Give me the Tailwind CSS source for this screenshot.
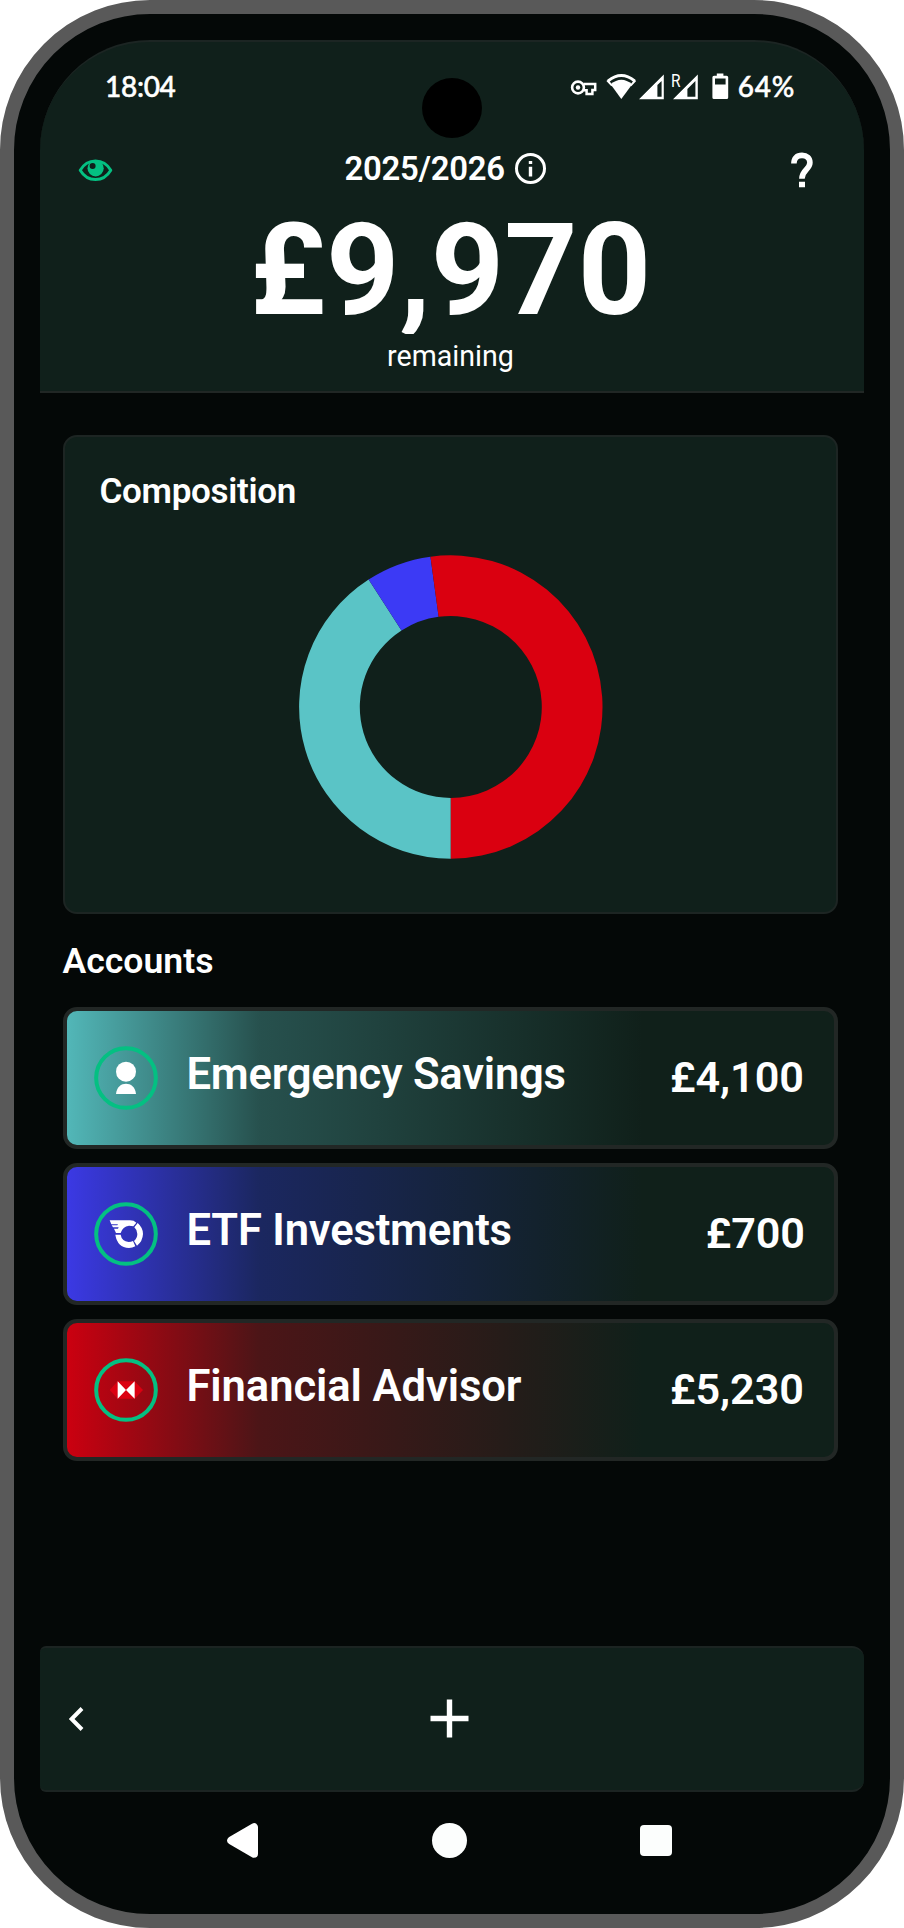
<!DOCTYPE html>
<html lang="en">
<head>
<meta charset="utf-8">
<title>Allowance</title>
<script src="https://cdn.jsdelivr.net/npm/@tailwindcss/browser@4"></script>
</head>
<body class="bg-white font-['Roboto',sans-serif] text-white">
<div class="relative flex h-[1928px] w-[904px] flex-col overflow-hidden rounded-[150px] border-[14px] border-[#595959] bg-[#040807] px-[26px] pt-[26px]">

  <header class="flex h-[353px] shrink-0 flex-col overflow-hidden rounded-t-[110px] border-y-2 border-t-[#1c2523] border-b-[#212725] bg-[#10201b]">
    <div class="flex h-[90px] shrink-0 items-center pr-[69px] pb-[2px] pl-[65px] font-['Lato',sans-serif] text-[28px] leading-8 font-medium [-webkit-text-stroke:0.5px_white]">
      <span class="tracking-[-0.3px]">18:04</span>
      <svg class="mr-[0.5px] ml-auto h-8 w-[162px] [-webkit-text-stroke:0]" viewBox="570 70.5 162 32" fill="none">
        <circle cx="579" cy="88" r="5.9" stroke="#fff" stroke-width="2.6"/>
        <circle cx="579" cy="88" r="2.2" fill="#fff"/>
        <path d="M584.5 84.6H596.2V90.6H593.4V94.4H587.6V90.8H584.6" stroke="#fff" stroke-width="2.5"/>
        <path d="M609.2 81.4Q622.3 70.6 635.6 81.4" stroke="#fff" stroke-width="3"/>
        <path d="M611.6 84.8Q622.3 75.6 633.2 84.8L622.3 99.4Z" fill="#fff"/>
        <path d="M607.4 81.4l1.8-1.4 4.4 5.8-1.3 1zM637.2 81.4l-1.8-1.4-4.4 5.8 1.3 1z" fill="#fff"/>
        <path fill-rule="evenodd" d="M640 99.7L664.8 75v24.7zM658.4 85.6v11.6h4.2V81.4z" fill="#fff"/>
        <path fill-rule="evenodd" d="M674 99.7L698.8 75v24.7zM688.4 89.6v7.6h8V81.6z" fill="#fff"/>
        <text x="672" y="87" font-family="Roboto" font-weight="400" font-size="18" textLength="9.5" lengthAdjust="spacingAndGlyphs" fill="#fff">R</text>
        <path fill-rule="evenodd" d="M717.8 74h6.6v2.2h3.2a1.6 1.6 0 0 1 1.6 1.6v20.2a1.6 1.6 0 0 1-1.6 1.6h-12.6a1.6 1.6 0 0 1-1.6-1.6V77.8a1.6 1.6 0 0 1 1.6-1.6h2.8zM716 79v6h10.6v-6z" fill="#fff"/>
      </svg>
      <span class="ml-[6px] tracking-[0.7px]">64%</span>
    </div>

    <div class="flex h-[72px] shrink-0 items-center pr-[51.5px] pl-[38px]">
      <svg class="mt-[4px] h-[22px] w-[35px]" viewBox="0 0 35 22" fill="none">
        <path d="M2.2 11.2C9.5-1.3 25.5-1.3 32.8 11.2C25.5 23.6 9.5 23.6 2.2 11.2Z" stroke="#04c082" stroke-width="2.9" stroke-linejoin="round"/>
        <circle cx="17.6" cy="9.3" r="8.1" fill="#04c082"/>
        <circle cx="14.6" cy="7" r="3" fill="#10201b"/>
      </svg>
      <span class="ml-[231.5px] w-[159px] pt-px text-[32.9px] leading-10 font-semibold tracking-[-0.3px] whitespace-nowrap">2025/2026</span>
      <svg class="ml-[11px] h-[31px] w-[31px]" viewBox="0 0 31 31">
        <circle cx="15.5" cy="15.5" r="14" fill="none" stroke="#fff" stroke-width="3"/>
        <path d="M13.8 8h3.4v3h-3.4zM13.8 13.7h3.4v9.8h-3.4z" fill="#fff"/>
      </svg>
      <svg class="mt-[4px] ml-auto h-[36px] w-[22px]" viewBox="0 0 22 36">
        <path d="M2.9 11.6C2.9 6.2 6 3.4 11 3.4S18.900 6.200 18.900 10.800C18.900 17.400 10.900 17.800 10.900 26.800" fill="none" stroke="#fff" stroke-width="5.6"/>
        <path d="M8 29.7h6v5.6H8z" fill="#fff"/>
      </svg>
    </div>

    <div class="mt-[2px] h-[128px] shrink-0 overflow-hidden pr-[3px] text-center text-[128px] leading-[128px] font-bold">£9,970</div>
    <div class="mt-[1.5px] pr-[3px] text-center text-[28.6px] leading-10">remaining</div>
  </header>

  <main class="mx-[22.5px] flex w-[775px] shrink-0 flex-col pt-[42px]">
    <section class="h-[479px] rounded-[14px] border-2 border-[#1d2523] bg-[#10201b] pt-[34.5px] pl-[35px]">
      <h2 class="text-[35px] leading-10 font-semibold tracking-[-0.3px]">Composition</h2>
      <svg class="mt-[43.5px] ml-[199px] h-[304px] w-[304px]" viewBox="-151.800 -152 304 304">
        <path d="M0 151.7A151.7 151.7 0 0 1-82.18-127.51L-49.3-76.49A91 91 0 0 0 0 91Z" fill="#5ac4c6"/>
        <path d="M-82.18-127.51A151.7 151.7 0 0 1-20.33-150.33L-12.19-90.18A91 91 0 0 0-49.3-76.49Z" fill="#3c3af5"/>
        <path d="M-20.33-150.33A151.7 151.7 0 1 1 0 151.7V91A91 91 0 1 0-12.19-90.18Z" fill="#da0010"/>
      </svg>
    </section>

    <h2 class="mt-[26.5px] text-[35.6px] leading-10 font-semibold">Accounts</h2>

    <div class="mt-[26px] flex flex-col gap-[14px]">
      <div class="flex h-[142.3px] items-center rounded-[14px] border-4 border-[#222725] bg-linear-to-r/srgb from-[#52b7b8] via-[#27514e] via-25% to-[#10201a] to-75% pr-[29.5px] pl-[27.5px]">
        <svg class="h-16 w-16" viewBox="0 0 192 192">
          <circle cx="96" cy="96" r="89.5" fill="none" stroke="#04c082" stroke-width="12"/>
          <circle cx="96" cy="77" r="30" fill="#fff"/>
          <path d="M66 144C68 122 82 113 96 113S124 122 126 144Z" fill="#fff"/>
        </svg>
        <span class="ml-[28.5px] pb-[5.500px] text-[43.6px] leading-[50px] font-semibold tracking-[-0.25px]">Emergency Savings</span>
        <span class="ml-auto text-[43.2px] leading-[50px] font-semibold tracking-[-0.05px]">£4,100</span>
      </div>

      <div class="flex h-[142.3px] items-center rounded-[14px] border-4 border-[#222725] bg-linear-to-r/srgb from-[#3b39e4] via-[#1b2760] via-25% to-[#10201a] to-75% pr-[28.5px] pl-[27.5px]">
        <svg class="h-16 w-16" viewBox="0 0 192 192">
          <circle cx="96" cy="96" r="89.5" fill="none" stroke="#04c082" stroke-width="12"/>
          <path d="M47 55H108Q120 55 127 62L118 73Q112 71 105 71Q86 73 80 93H66L60 80H72L74 76H57L53 70H70L72 67H52Z" fill="#fff"/>
          <path d="M64 98H80Q83 117 104 120Q111 120 117 117L124 133Q115 138 105 138Q70 136 64 98Z" fill="#fff"/>
          <path d="M131 63Q147 77 147 96Q146 118 129 131L120 117Q130 108 130 96Q130 84 121 76Z" fill="#fff"/>
        </svg>
        <span class="ml-[28.5px] pb-[5.500px] text-[43.6px] leading-[50px] font-semibold tracking-[-0.2px]">ETF Investments</span>
        <span class="ml-auto text-[43.2px] leading-[50px] font-semibold tracking-[-0.05px]">£700</span>
      </div>

      <div class="flex h-[142.3px] items-center rounded-[14px] border-4 border-[#222725] bg-linear-to-r/srgb from-[#cb0010] via-[#4c1517] via-25% to-[#10201a] to-75% pr-[29.5px] pl-[27.5px]">
        <svg class="h-16 w-16" viewBox="0 0 192 192">
          <circle cx="96" cy="96" r="89.5" fill="none" stroke="#04c082" stroke-width="12"/>
          <path d="M47 96L71 70H122L147 96L122 122H71Z" fill="#db0011"/>
          <path d="M71 70L96 96L71 122ZM122 70L96 96L122 122Z" fill="#fff"/>
        </svg>
        <span class="ml-[28.5px] pb-[5.500px] text-[43.6px] leading-[50px] font-semibold tracking-[-0.1px]">Financial Advisor</span>
        <span class="ml-auto text-[43.2px] leading-[50px] font-semibold tracking-[-0.05px]">£5,230</span>
      </div>
    </div>
  </main>

  <div class="mt-auto flex h-[145.5px] shrink-0 items-center rounded-l-[6px] rounded-r-[12px] border-y-2 border-[#1c2422] bg-[#10201b] pl-[28px]">
    <svg class="h-[26px] w-4" viewBox="0 0 16 26" fill="none" stroke="#fff" stroke-width="4"><path d="M14 2.5L3.6 13L14 23.5"/></svg>
    <svg class="ml-[346px] h-[39px] w-[39px]" viewBox="0 0 39 39" fill="none" stroke="#fff" stroke-width="5.4"><path d="M19.5.5v38M.5 19.5h38"/></svg>
  </div>

  <nav class="flex h-[122.5px] shrink-0 items-center pb-[25px] pl-[187px]">
    <svg class="h-[35px] w-[31px]" viewBox="0 0 31 35" fill="#fff" stroke="#fff" stroke-width="8" stroke-linejoin="round"><path d="M4.2 17.5L27 4.3V30.7Z"/></svg>
    <div class="ml-[174px] h-[34.5px] w-[34.5px] rounded-full bg-[#fcfefd]"></div>
    <div class="ml-[173.5px] h-[31.5px] w-[31.5px] rounded-[4px] bg-[#fcfefd]"></div>
  </nav>

  <!-- Camera cutout -->
  <div class="absolute top-[64px] left-[408px] h-[60px] w-[60px] rounded-full bg-black"></div>
</div>
</body>
</html>
